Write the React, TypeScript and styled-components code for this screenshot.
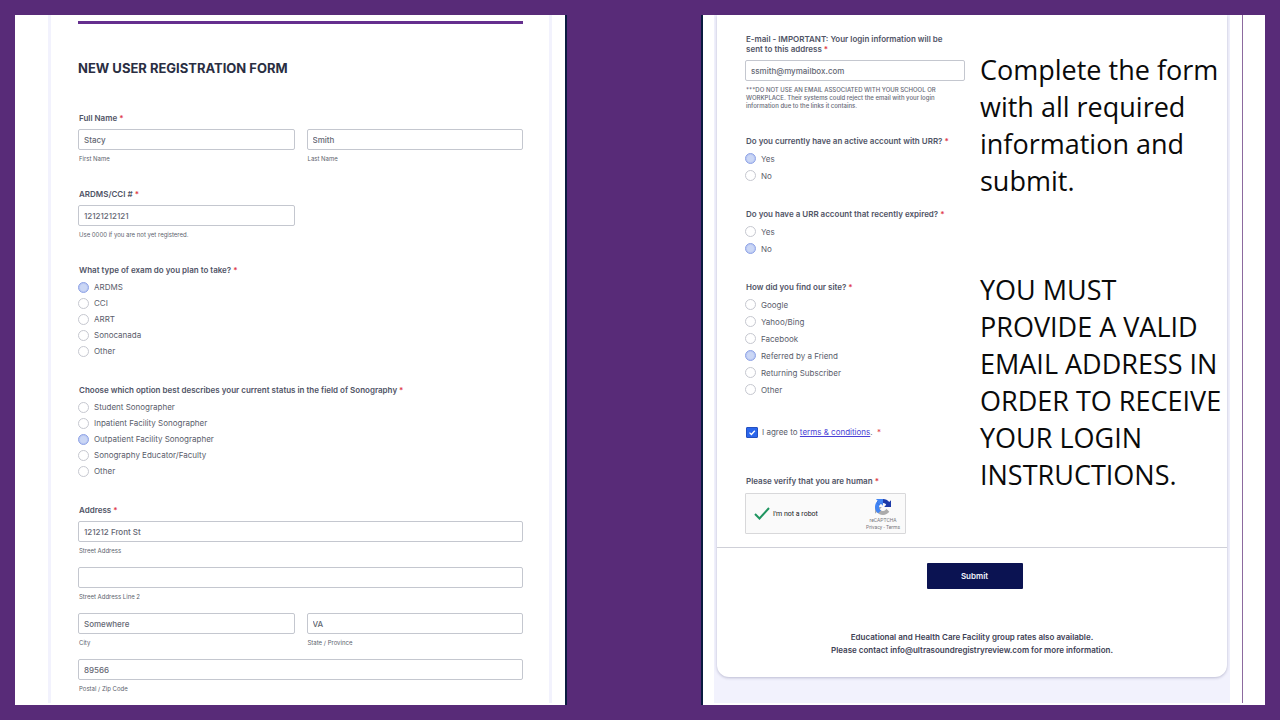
import React, { useState } from "react";
import styled, { createGlobalStyle } from "styled-components";

const GlobalStyle = createGlobalStyle`
  *, *::before, *::after { box-sizing: border-box; }
  body { margin: 0; background: #582b78; font-family: Inter, "Liberation Sans", sans-serif; }
  fieldset, legend, p, h1 { margin: 0; padding: 0; border: 0; min-width: 0; }
`;

const Slide = styled.div`
  display: grid;
  grid-template-columns: minmax(0, 552fr) minmax(0, 134fr) minmax(0, 564fr);
  min-height: 100vh;
  padding: 15px;
`;

const Panel = styled.section<{ $edge: "left" | "right" }>`
  display: flex;
  background: #ffffff;
  grid-column: ${(p) => (p.$edge === "right" ? 1 : 3)};
  border-${(p) => p.$edge}: 2px solid #0a1b40;
  padding: ${(p) => (p.$edge === "right" ? "0 13px 2px 33px" : "0 0 2px 11px")};
`;

const Backdrop = styled.div`
  flex: 1;
  padding: 0 3px;
  background: #f2f2fd;
`;

const Margin = styled.div`
  width: 35px;
  padding-left: 12px;
  &::before {
    content: "";
    display: block;
    height: 100%;
    border-left: 1px solid #8c6a9f;
  }
`;

const Card = styled.form<{ $rounded?: boolean }>`
  background: #ffffff;
  ${(p) =>
    p.$rounded
      ? "border-radius: 0 0 12px 12px; box-shadow: 0 1px 3px rgba(60, 60, 110, 0.3);"
      : "height: 100%; padding: 6px 26px 0 27px;"}
`;

const Rule = styled.div`
  height: 3px;
  background: #652f8e;
`;

const Heading = styled.h1`
  margin: 36px 0 37px;
  font-size: 13px;
  line-height: 16px;
  font-weight: 700;
  color: #2a2e42;
`;

const Stack = styled.div<{ $gap: number }>`
  display: flex;
  flex-direction: column;
  gap: ${(p) => p.$gap}px;
`;

const Group = styled.fieldset``;

const labelText = `
  display: block;
  padding-left: 1px;
  font-size: 8px;
  line-height: 10px;
  font-weight: 600;
  color: #505466;
  white-space: nowrap;
`;

const Legend = styled.legend`
  ${labelText}
`;

const FieldLabel = styled.label`
  ${labelText}
`;

const Star = styled.span`
  color: #e0394a;
`;

const Fields = styled.div`
  display: grid;
  grid-template-columns: 1fr 1fr;
  gap: 12px;
  margin-top: 6px;
`;

const Cell = styled.div<{ $wide?: boolean }>`
  grid-column: ${(p) => (p.$wide ? "1 / -1" : "auto")};
`;

const TextInput = styled.input`
  display: block;
  width: 100%;
  height: 21px;
  padding: 0 5px;
  border: 1px solid #c4c7cf;
  border-radius: 2px;
  background: #ffffff;
  font: 500 8px/10px Inter, "Liberation Sans", sans-serif;
  color: #646773;
  outline: none;
`;

const SubLabel = styled.label`
  display: block;
  margin-top: 5px;
  padding-left: 1px;
  font-size: 6px;
  line-height: 8px;
  color: #5c5f6d;
`;

const Hint = styled.p`
  margin: 5px 0 1px;
  padding-left: 1px;
  font-size: 6px;
  line-height: 8px;
  font-weight: 500;
  color: #666976;
  white-space: nowrap;
`;

const EmailBox = styled.div`
  padding-top: 6px;
`;

const Options = styled.div`
  padding-top: 4px;
`;

const Option = styled.label<{ $row: number }>`
  display: flex;
  align-items: center;
  gap: 5px;
  height: ${(p) => p.$row}px;
  font-size: 8px;
  line-height: 10px;
  color: #5a5d6b;
`;

const Radio = styled.input`
  appearance: none;
  width: 11px;
  height: 11px;
  margin: 0;
  border: 1px solid #c6c8d0;
  border-radius: 50%;
  background: #ffffff;
  &:checked {
    border-color: #8fa3e6;
    background: #cbd7f5;
    box-shadow: inset 0 0 0 1px #b9c8f3;
  }
`;

const Columns = styled.div`
  display: grid;
  grid-template-columns: 220px 1fr;
  column-gap: 15px;
  padding: 19px 0 13px 28px;
`;

const Aside = styled.div`
  display: flex;
  flex-direction: column;
  gap: 72px;
  padding-top: 17px;
  font-family: "Open Sans", "Noto Sans", sans-serif;
  font-size: 27px;
  line-height: 37px;
  color: #0a0a0a;
  white-space: nowrap;
`;

const Agree = styled.div`
  display: flex;
  align-items: center;
  gap: 4px;
  margin: 28px 0 38px;
  padding-left: 1px;
  height: 12px;
  font-size: 8px;
  line-height: 10px;
  color: #5a5d6b;
  a { color: #4a3fd6; }
`;

const TickBox = styled.span`
  position: relative;
  display: flex;
  width: 12px;
  height: 11px;
  svg { position: absolute; inset: 0; pointer-events: none; }
`;

const Tick = styled.input`
  appearance: none;
  width: 12px;
  height: 11px;
  margin: 0;
  border: 1px solid #2450c0;
  border-radius: 1px;
  background: #2a66ec;
`;

const Captcha = styled.div`
  display: flex;
  align-items: center;
  width: 161px;
  height: 41px;
  margin-top: 7px;
  padding: 0 5px 0 8px;
  border: 1px solid #d8d8da;
  border-radius: 1px;
  background: #fafafa;
  font-family: Roboto, sans-serif;
  font-size: 7px;
  line-height: 8px;
  color: #202024;
`;

const CaptchaText = styled.span`
  flex: 1;
  padding-left: 3px;
`;

const Badge = styled.div`
  display: flex;
  flex-direction: column;
  align-items: center;
  padding-top: 2px;
  font-size: 5px;
  line-height: 7px;
  color: #77777c;
  svg { margin-bottom: 2px; }
  a { color: inherit; text-decoration: none; }
`;

const Footer = styled.div`
  display: flex;
  flex-direction: column;
  align-items: center;
  padding: 15px 0 20px;
  border-top: 1px solid #cfd0d8;
`;

const Submit = styled.button`
  width: 96px;
  height: 26px;
  margin-left: 5px;
  border: 0;
  border-radius: 1px;
  background: #0b1352;
  font: 600 8px/10px Inter, "Liberation Sans", sans-serif;
  color: #f2f2fa;
`;

const Notice = styled.p`
  margin-top: 42px;
  text-align: center;
  font-size: 8px;
  line-height: 13px;
  font-weight: 600;
  color: #3d4154;
`;

function Required() {
  return <Star>*</Star>;
}

function Field({ id, label, value, wide }: { id: string; label: string; value: string; wide?: boolean }) {
  return (
    <Cell $wide={wide}>
      <TextInput id={id} defaultValue={value} />
      <SubLabel htmlFor={id}>{label}</SubLabel>
    </Cell>
  );
}

function Choice({
  name,
  title,
  items,
  initial,
  row,
}: {
  name: string;
  title: string;
  items: string[];
  initial: string;
  row: number;
}) {
  const [picked, setPicked] = useState(initial);
  return (
    <Group>
      <Legend>
        {title} <Required />
      </Legend>
      <Options>
        {items.map((item) => (
          <Option key={item} $row={row}>
            <Radio type="radio" name={name} checked={picked === item} onChange={() => setPicked(item)} />
            {item}
          </Option>
        ))}
      </Options>
    </Group>
  );
}

function CaptchaLogo() {
  return (
    <svg width="16" height="16" viewBox="0 0 64 64" aria-hidden="true">
      <path
        fill="#ababab"
        d="M0 32.045l.002.91v26.488l7.214-7.214c5.903 7.192 14.766 11.769 24.699 11.769 10.337 0 19.521-4.948 25.339-12.612L45.43 39.437a15.67 15.67 0 0 1-4.788 5.374c-2.066 1.612-4.994 2.931-8.909 2.931-.473 0-.838-.055-1.106-.159-4.85-.383-9.055-3.061-11.53-6.947l8.37-8.37z"
      />
      <path
        fill="#4285f4"
        d="M31.862.004l-.907.002H4.54l7.214 7.214C4.563 13.12-.014 21.982-.014 31.915c0 10.337 4.948 19.521 12.612 25.339l11.949-11.824a15.67 15.67 0 0 1-5.374-4.788c-1.612-2.066-2.931-4.994-2.931-8.909 0-.473.055-.838.159-1.106.383-4.85 3.061-9.055 6.947-11.53l8.37 8.37z"
      />
      <path
        fill="#1c3aa9"
        d="M64 31.955l-.002-.91V4.557l-7.214 7.214C50.881 4.579 42.018.002 32.085.002c-10.337 0-19.521 4.948-25.339 12.612l11.824 11.949a15.67 15.67 0 0 1 4.788-5.374c2.066-1.612 4.994-2.931 8.909-2.931.473 0 .838.055 1.106.159 4.85.383 9.055 3.061 11.53 6.947l-8.37 8.37z"
      />
      <path fill="#4285f4" d="M6.746 12.614L18.57 24.563a15.67 15.67 0 0 1 4.788-5.374L31.9 16V.004H4.54l7.214 7.214z" />
    </svg>
  );
}

export default function App() {
  return (
    <>
      <GlobalStyle />
      <Slide>
        <Panel $edge="right">
          <Backdrop>
            <Card onSubmit={(e) => e.preventDefault()}>
              <Rule />
              <Heading>NEW USER REGISTRATION FORM</Heading>
              <Stack $gap={26}>
                <Group>
                  <Legend>
                    Full Name <Required />
                  </Legend>
                  <Fields>
                    <Field id="first" label="First Name" value="Stacy" />
                    <Field id="last" label="Last Name" value="Smith" />
                  </Fields>
                </Group>
                <Group>
                  <Legend>
                    ARDMS/CCI # <Required />
                  </Legend>
                  <Fields>
                    <Field id="ardms" label="Use 0000 if you are not yet registered." value="12121212121" />
                  </Fields>
                </Group>
                <Choice
                  name="exam"
                  title="What type of exam do you plan to take?"
                  items={["ARDMS", "CCI", "ARRT", "Sonocanada", "Other"]}
                  initial="ARDMS"
                  row={16}
                />
                <Choice
                  name="status"
                  title="Choose which option best describes your current status in the field of Sonography"
                  items={[
                    "Student Sonographer",
                    "Inpatient Facility Sonographer",
                    "Outpatient Facility Sonographer",
                    "Sonography Educator/Faculty",
                    "Other",
                  ]}
                  initial="Outpatient Facility Sonographer"
                  row={16}
                />
                <Group>
                  <Legend>
                    Address <Required />
                  </Legend>
                  <Fields>
                    <Field wide id="street" label="Street Address" value="121212 Front St" />
                    <Field wide id="street2" label="Street Address Line 2" value="" />
                    <Field id="city" label="City" value="Somewhere" />
                    <Field id="state" label="State / Province" value="VA" />
                    <Field wide id="zip" label="Postal / Zip Code" value="89566" />
                  </Fields>
                </Group>
              </Stack>
            </Card>
          </Backdrop>
        </Panel>

        <Panel $edge="left">
          <Backdrop>
            <Card $rounded onSubmit={(e) => e.preventDefault()}>
              <Columns>
                <div>
                  <Stack $gap={25}>
                    <div>
                      <FieldLabel htmlFor="email">
                        E-mail - IMPORTANT: Your login information will be
                        <br />
                        sent to this address <Required />
                      </FieldLabel>
                      <EmailBox>
                        <TextInput id="email" type="email" defaultValue="ssmith@mymailbox.com" />
                      </EmailBox>
                      <Hint>
                        ***DO NOT USE AN EMAIL ASSOCIATED WITH YOUR SCHOOL OR
                        <br />
                        WORKPLACE. Their systems could reject the email with your login
                        <br />
                        information due to the links it contains.
                      </Hint>
                    </div>
                    <Choice
                      name="active"
                      title="Do you currently have an active account with URR?"
                      items={["Yes", "No"]}
                      initial="Yes"
                      row={17}
                    />
                    <Choice
                      name="expired"
                      title="Do you have a URR account that recently expired?"
                      items={["Yes", "No"]}
                      initial="No"
                      row={17}
                    />
                    <Choice
                      name="source"
                      title="How did you find our site?"
                      items={["Google", "Yahoo/Bing", "Facebook", "Referred by a Friend", "Returning Subscriber", "Other"]}
                      initial="Referred by a Friend"
                      row={17}
                    />
                  </Stack>
                  <Agree>
                    <TickBox>
                      <Tick id="agree" type="checkbox" defaultChecked />
                      <svg viewBox="0 0 12 11" aria-hidden="true">
                        <path d="M3.500 5.600l1.900 1.900 3.400-3.800" fill="none" stroke="#fff" strokeWidth="1.300" />
                      </svg>
                    </TickBox>
                    <label htmlFor="agree">
                      I agree to <a href="#terms">terms &amp; conditions</a>. &nbsp;<Required />
                    </label>
                  </Agree>
                  <Group>
                    <Legend>
                      Please verify that you are human <Required />
                    </Legend>
                    <Captcha>
                      <svg width="16" height="13" viewBox="0 0 16 13" aria-hidden="true">
                        <path d="M1 7l4.500 4.500L15 1" fill="none" stroke="#1f9560" strokeWidth="2" />
                      </svg>
                      <CaptchaText>I'm not a robot</CaptchaText>
                      <Badge>
                        <CaptchaLogo />
                        <span>reCAPTCHA</span>
                        <span>
                          <a href="#privacy">Privacy</a> - <a href="#captcha-terms">Terms</a>
                        </span>
                      </Badge>
                    </Captcha>
                  </Group>
                </div>
                <Aside>
                  <p>
                    Complete the form
                    <br />
                    with all required
                    <br />
                    information and
                    <br />
                    submit.
                  </p>
                  <p>
                    YOU MUST
                    <br />
                    PROVIDE A VALID
                    <br />
                    EMAIL ADDRESS IN
                    <br />
                    ORDER TO RECEIVE
                    <br />
                    YOUR LOGIN
                    <br />
                    INSTRUCTIONS.
                  </p>
                </Aside>
              </Columns>
              <Footer>
                <Submit type="submit">Submit</Submit>
                <Notice>
                  Educational and Health Care Facility group rates also available.
                  <br />
                  Please contact info@ultrasoundregistryreview.com for more information.
                </Notice>
              </Footer>
            </Card>
          </Backdrop>
          <Margin />
        </Panel>
      </Slide>
    </>
  );
}
